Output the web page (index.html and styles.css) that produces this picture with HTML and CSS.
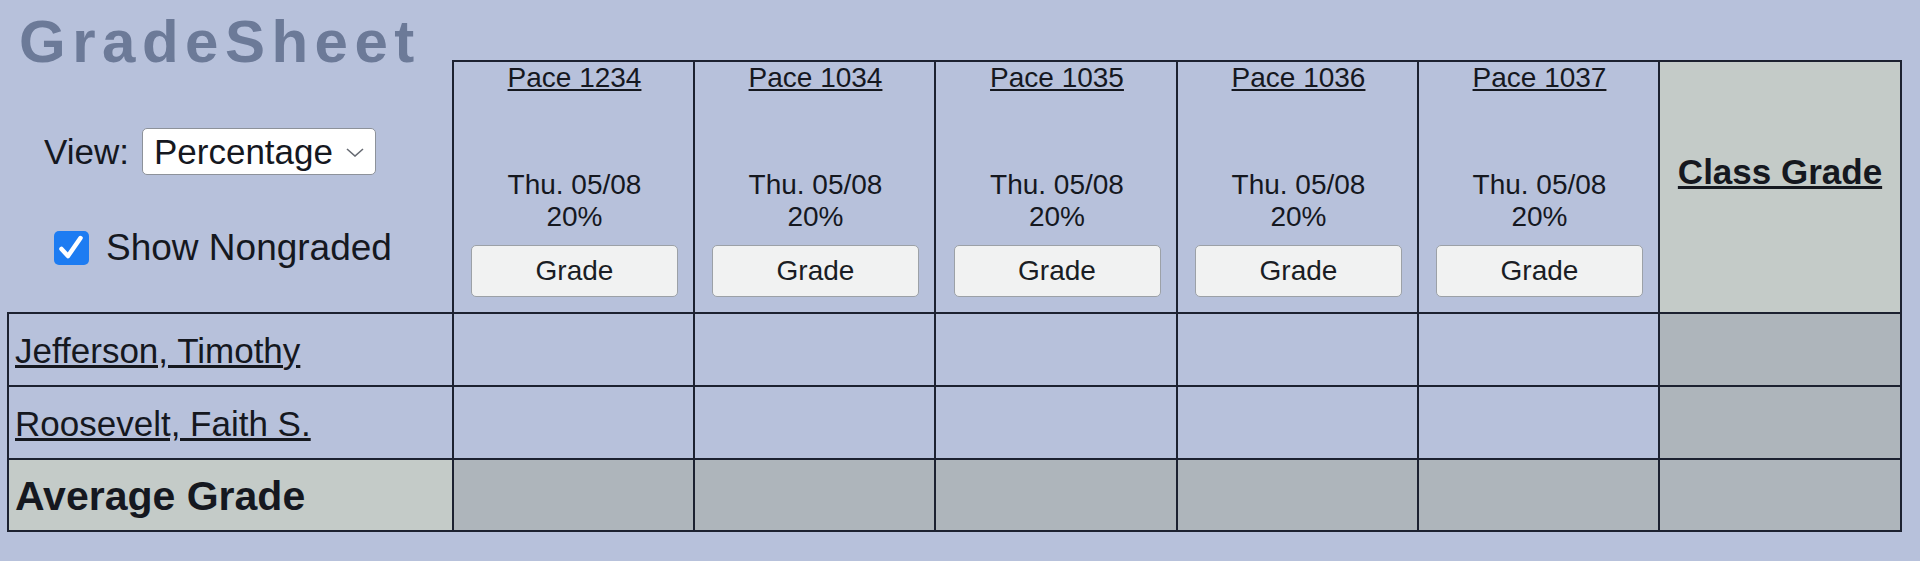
FILE: index.html
```html
<!DOCTYPE html>
<html lang="en">
<head>
<meta charset="utf-8">
<title>GradeSheet</title>
<link rel="stylesheet" href="styles.css">
</head>
<body>
<div class="page">
  <h1 class="title">GradeSheet</h1>
  <table class="sheet">
    <colgroup>
      <col class="c-name">
      <col class="c-pace">
      <col class="c-pace">
      <col class="c-pace-w">
      <col class="c-pace">
      <col class="c-pace">
      <col class="c-class">
    </colgroup>
    <thead>
      <tr class="head-row">
        <td class="controls">
          <div class="controls-inner">
            <div class="view-row">
              <span class="view-label">View:</span>
              <span class="select-wrap">
                <select class="view-select">
                  <option>Percentage</option>
                  <option>Points</option>
                  <option>Letter</option>
                </select>
                <svg class="chev" viewBox="0 0 18 9" aria-hidden="true"><path d="M1 1 L9 8 L17 1"/></svg>
              </span>
            </div>
            <label class="ng-row">
              <input type="checkbox" class="cb-input" checked>
              <span class="cb"><svg viewBox="0 0 34 34" aria-hidden="true"><path d="M7 18 L13.5 25 L26 7"/></svg></span>
              <span class="ng-text">Show Nongraded</span>
            </label>
          </div>
        </td>
        <th class="pace"><div class="pace-inner"><a class="pace-link" href="#">Pace 1234</a><span class="pace-date">Thu. 05/08</span><span class="pace-pct">20%</span><button class="grade-btn" type="button">Grade</button></div></th>
        <th class="pace"><div class="pace-inner"><a class="pace-link" href="#">Pace 1034</a><span class="pace-date">Thu. 05/08</span><span class="pace-pct">20%</span><button class="grade-btn" type="button">Grade</button></div></th>
        <th class="pace"><div class="pace-inner"><a class="pace-link" href="#">Pace 1035</a><span class="pace-date">Thu. 05/08</span><span class="pace-pct">20%</span><button class="grade-btn" type="button">Grade</button></div></th>
        <th class="pace"><div class="pace-inner"><a class="pace-link" href="#">Pace 1036</a><span class="pace-date">Thu. 05/08</span><span class="pace-pct">20%</span><button class="grade-btn" type="button">Grade</button></div></th>
        <th class="pace"><div class="pace-inner"><a class="pace-link" href="#">Pace 1037</a><span class="pace-date">Thu. 05/08</span><span class="pace-pct">20%</span><button class="grade-btn" type="button">Grade</button></div></th>
        <th class="class-grade"><a class="class-link" href="#">Class Grade</a></th>
      </tr>
    </thead>
    <tbody>
      <tr class="student">
        <td class="name"><a class="name-link" href="#">Jefferson, Timothy</a></td>
        <td class="grade"></td><td class="grade"></td><td class="grade"></td><td class="grade"></td><td class="grade"></td>
        <td class="cg"></td>
      </tr>
      <tr class="student">
        <td class="name"><a class="name-link" href="#">Roosevelt, Faith S.</a></td>
        <td class="grade"></td><td class="grade"></td><td class="grade"></td><td class="grade"></td><td class="grade"></td>
        <td class="cg"></td>
      </tr>
      <tr class="avg">
        <td class="avg-label">Average Grade</td>
        <td class="avg-cell"></td><td class="avg-cell"></td><td class="avg-cell"></td><td class="avg-cell"></td><td class="avg-cell"></td>
        <td class="avg-cell"></td>
      </tr>
    </tbody>
  </table>
</div>
</body>
</html>
```

FILE: styles.css
```css
html, body {
  margin: 0;
  background: #b7c1db;
}
body {
  font-family: "Liberation Sans", Arial, sans-serif;
  color: #15181f;
}
.page {
  padding: 0 0 0 7px;
}
.title {
  margin: 0 0 0 12px;
  height: 60px;
  line-height: 84px;
  font-size: 60px;
  font-weight: bold;
  letter-spacing: 6.5px;
  color: #6c7a98;
}
.sheet {
  border-collapse: collapse;
  table-layout: fixed;
  width: 1893px;
}
.c-name { width: 445px; }
.c-pace { width: 241px; }
.c-pace-w { width: 242px; }
.c-class { width: 242px; }
.sheet td, .sheet th {
  border: 2px solid #1c2130;
  padding: 0;
}
.sheet .controls {
  border: none;
  vertical-align: top;
}
.controls-inner {
  padding: 67px 0 0 36px;
}
.view-row {
  display: flex;
  align-items: center;
  gap: 13px;
  font-size: 35px;
}
.select-wrap {
  position: relative;
  display: block;
  height: 47px;
}
.view-select {
  -webkit-appearance: none;
  appearance: none;
  display: block;
  width: 234px;
  height: 47px;
  margin: 0;
  padding: 0 0 0 11px;
  font: 35px "Liberation Sans", Arial, sans-serif;
  color: #15181f;
  background: #fff;
  border: 1px solid #8d929a;
  border-radius: 5px;
}
.chev {
  position: absolute;
  right: 12px;
  top: 20px;
  width: 18px;
  height: 9px;
  fill: none;
  stroke: #666a72;
  stroke-width: 1.6;
  pointer-events: none;
}
.ng-row {
  display: flex;
  align-items: center;
  margin: 56px 0 0 10px;
  height: 34px;
  font-size: 37px;
}
.cb-input {
  display: none;
}
.cb {
  display: block;
  width: 35px;
  height: 34px;
  margin-right: 17px;
  background: #1d7cf2;
  border-radius: 5px;
}
.cb svg {
  display: block;
  width: 35px;
  height: 34px;
  fill: none;
  stroke: #fff;
  stroke-width: 4.5;
  stroke-linecap: round;
  stroke-linejoin: round;
}
.sheet .pace {
  vertical-align: top;
  font-weight: normal;
  font-size: 28px;
  line-height: 32px;
}
.pace-inner {
  display: flex;
  flex-direction: column;
  align-items: center;
  padding: 0 0 15px 2px;
}
.pace-link, .class-link, .name-link {
  color: inherit;
  text-decoration: underline;
}
.pace-date {
  margin-top: 75px;
}
.grade-btn {
  margin-top: 12px;
  width: 207px;
  height: 52px;
  padding: 0;
  font: 28px "Liberation Sans", Arial, sans-serif;
  color: #1a1d24;
  background: #f1f2f2;
  border: 1px solid #9ca1a7;
  border-radius: 5px;
}
.sheet .class-grade {
  background: #c4cbc8;
  vertical-align: middle;
  padding-bottom: 30px;
  font-size: 35px;
  line-height: 40px;
  font-weight: bold;
}
.student {
  height: 73px;
}
.avg {
  height: 72px;
}
.sheet .name {
  font-size: 35px;
  line-height: 40px;
  padding-left: 6px;
  padding-top: 2px;
}
.cg, .avg-cell {
  background: #aeb5bb;
}
.sheet .avg-label {
  background: #c4cbc8;
  font-size: 41px;
  line-height: 47px;
  font-weight: bold;
  padding-left: 6px;
  padding-top: 2px;
}
```
